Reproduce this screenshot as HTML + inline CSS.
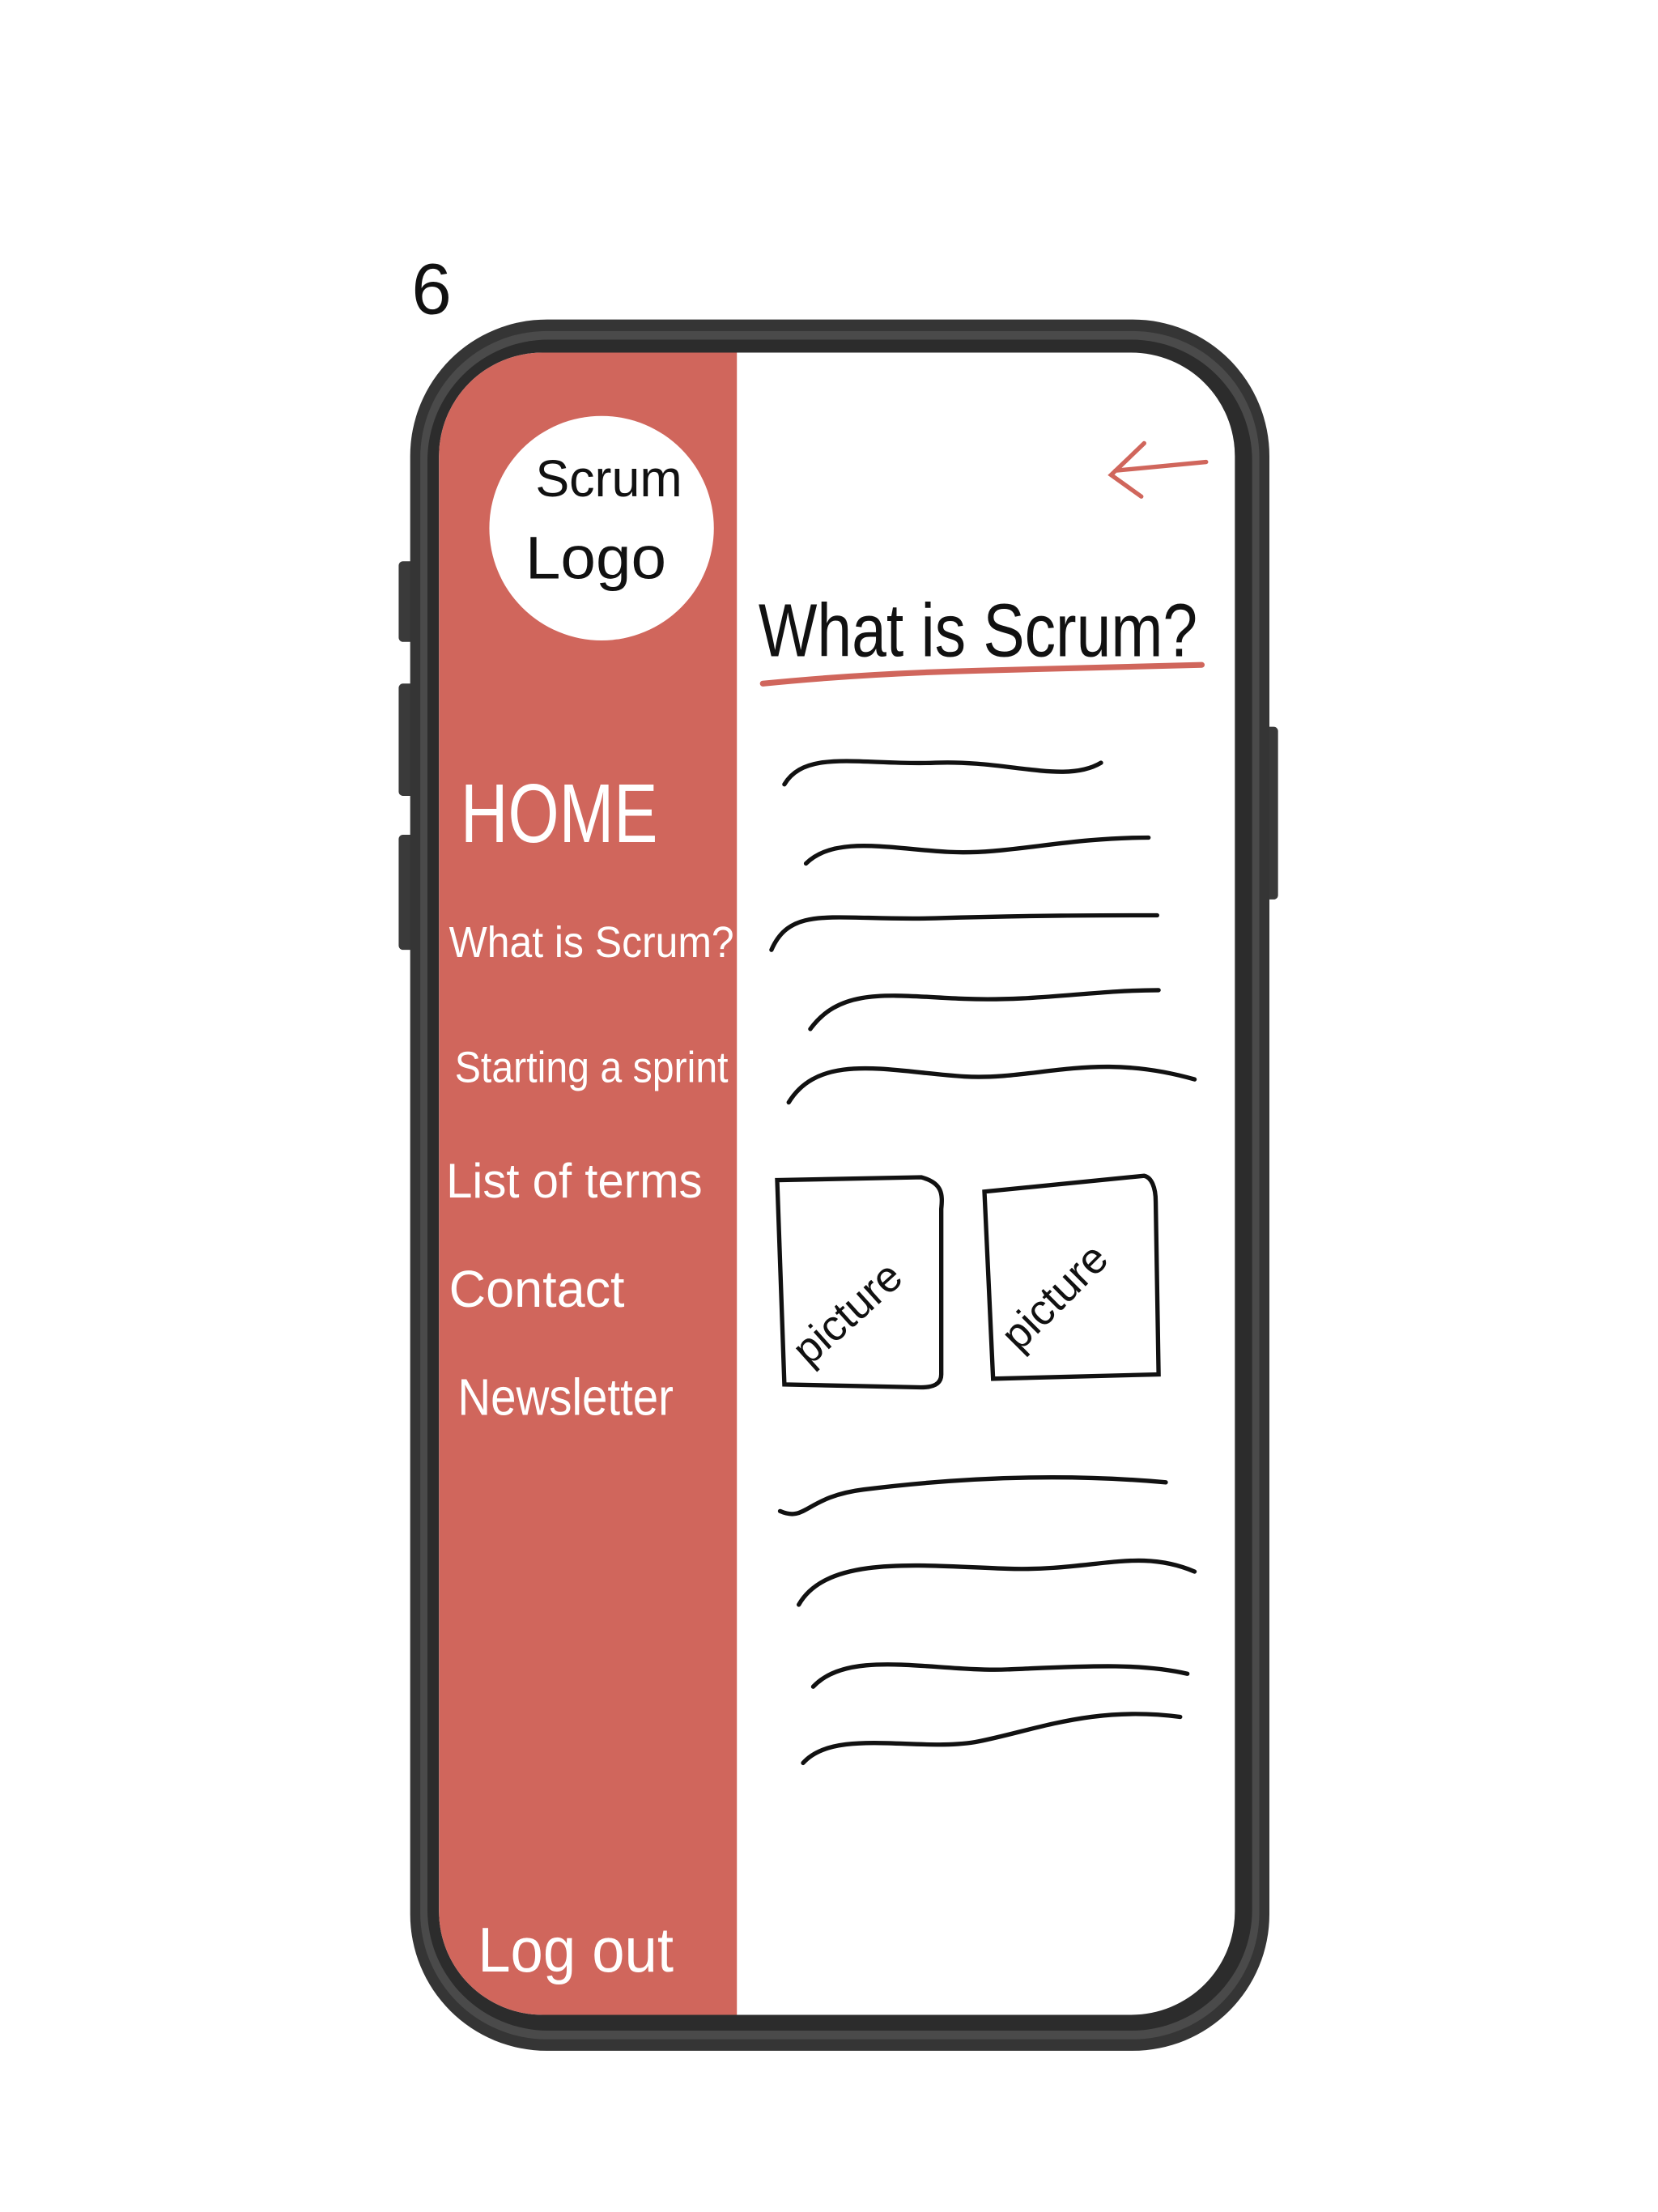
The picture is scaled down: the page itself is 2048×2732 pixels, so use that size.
<!DOCTYPE html>
<html><head><meta charset="utf-8"><style>
html,body{margin:0;padding:0;background:#fff;width:2048px;height:2732px;overflow:hidden}
svg{display:block}
text{font-family:"Liberation Sans",sans-serif}
</style></head><body>
<svg width="2048" height="2732" viewBox="0 0 1152 1537" preserveAspectRatio="none" xmlns="http://www.w3.org/2000/svg">
<defs>
<clipPath id="scr"><rect x="305" y="245" width="553" height="1155" rx="72"/></clipPath>
</defs>
<text x="286" y="218" font-size="50" fill="#111">6</text>
<rect x="277" y="390" width="12" height="56" rx="3" fill="#3a3a3a"/>
<rect x="277" y="475" width="12" height="78" rx="3" fill="#3a3a3a"/>
<rect x="277" y="580" width="12" height="80" rx="3" fill="#3a3a3a"/>
<rect x="876" y="505" width="12" height="120" rx="3" fill="#3a3a3a"/>
<rect x="285" y="222" width="597" height="1203" rx="95" fill="#353535"/>
<rect x="292" y="230" width="583" height="1187" rx="88" fill="#4a4a4a"/>
<rect x="297" y="236" width="573" height="1175" rx="84" fill="#2c2c2c"/>
<rect x="305" y="245" width="553" height="1155" rx="72" fill="#fff"/>
<g clip-path="url(#scr)">
<rect x="305" y="245" width="207" height="1155" fill="#d0665c"/>
</g>
<circle cx="418" cy="367" r="78" fill="#fff"/>
<text x="372" y="345" font-size="36" textLength="102" lengthAdjust="spacingAndGlyphs" fill="#111">Scrum</text>
<text x="365" y="402" font-size="42" textLength="98" lengthAdjust="spacingAndGlyphs" fill="#111">Logo</text>
<text x="320" y="585" font-size="58" textLength="137" lengthAdjust="spacingAndGlyphs" fill="#fff">HOME</text>
<text x="312" y="665" font-size="30" textLength="198" lengthAdjust="spacingAndGlyphs" fill="#fff">What is Scrum?</text>
<text x="316" y="752" font-size="30" textLength="190" lengthAdjust="spacingAndGlyphs" fill="#fff">Starting a sprint</text>
<text x="310" y="832" font-size="34" textLength="178" lengthAdjust="spacingAndGlyphs" fill="#fff">List of terms</text>
<text x="312" y="908" font-size="36" textLength="122" lengthAdjust="spacingAndGlyphs" fill="#fff">Contact</text>
<text x="318" y="983" font-size="36" textLength="150" lengthAdjust="spacingAndGlyphs" fill="#fff">Newsletter</text>
<text x="332" y="1370" font-size="44" textLength="136" lengthAdjust="spacingAndGlyphs" fill="#fff">Log out</text>
<path d="M838 321 L775 327 M795 308 L772 330 L793 345" stroke="#d0665c" stroke-width="3" fill="none" stroke-linecap="round"/>
<text x="527" y="456" font-size="52" textLength="305" lengthAdjust="spacingAndGlyphs" fill="#111">What is Scrum?</text>
<path d="M530 475 Q600 468 680 466 T835 462" stroke="#d0665c" stroke-width="4" fill="none" stroke-linecap="round"/>
<g stroke="#111" stroke-width="3" fill="none" stroke-linecap="round">
<path d="M545 545 C560 520 600 532 650 530 S740 545 765 530"/>
<path d="M560 600 C580 580 620 590 660 592 S740 582 798 582"/>
<path d="M536 660 C550 628 580 640 650 638 S760 636 804 636"/>
<path d="M563 715 C585 685 620 692 670 694 S760 688 805 688"/>
<path d="M548 766 C570 730 620 745 670 748 S760 730 830 750"/>
<path d="M542 1050 C560 1058 560 1040 600 1035 S720 1022 810 1030"/>
<path d="M555 1115 C575 1080 640 1088 700 1090 S790 1075 830 1092"/>
<path d="M565 1172 C590 1145 650 1162 700 1160 S790 1155 825 1163"/>
<path d="M558 1225 C580 1200 640 1218 680 1210 S760 1185 820 1193"/>
<path d="M540 820 L640 818 C655 822 655 830 654 840 L654 955 C654 962 648 964 640 964 L545 962 Z"/>
<path d="M684 828 L795 817 C800 818 803 825 803 835 L805 955 L690 958 Z"/>
</g>
<text x="0" y="0" font-size="30" fill="#111" transform="translate(562 950) rotate(-42)">picture</text>
<text x="0" y="0" font-size="30" fill="#111" transform="translate(708 940) rotate(-45)">picture</text>
</svg>
</body></html>
